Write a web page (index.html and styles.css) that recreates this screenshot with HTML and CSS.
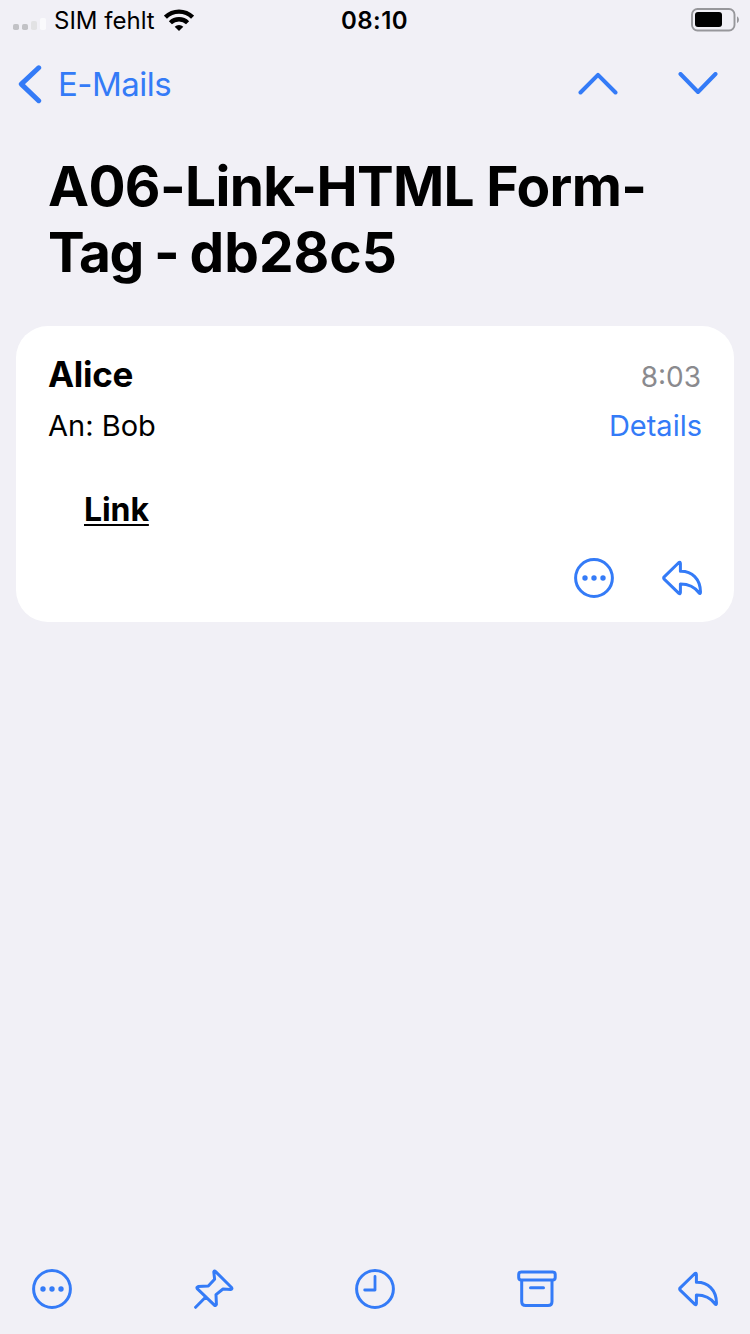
FILE: index.html
```html
<!DOCTYPE html>
<html lang="de">
<head>
<meta charset="utf-8">
<title>A06-Link-HTML Form-Tag - db28c5</title>
<link rel="stylesheet" href="styles.css">
</head>
<body>
<svg class="defs" aria-hidden="true">
  <symbol id="more" viewBox="0 0 40 40">
    <circle class="line" cx="20" cy="20" r="18.4"/>
    <g fill="currentColor"><circle cx="11" cy="20" r="2.700"/><circle cx="20" cy="20" r="2.700"/><circle cx="29" cy="20" r="2.700"/></g>
  </symbol>
  <symbol id="reply" viewBox="0 0 40 40">
    <path class="line" d="M18.400 5.500V13.300C30 13 38.300 21 38.500 34Q38.500 36.500 37 34.900C32.500 28.500 27 26 18.400 26V34.500Q18.300 36.500 16.900 35.300L2.200 21.200Q1.200 20 2.200 18.800L16.900 4.500Q18.300 3.500 18.400 5.500Z"/>
  </symbol>
</svg>

<header class="status">
  <div class="carrier">
    <svg class="signal" viewBox="0 0 34 14"><rect y="8" width="6" height="6" rx="1.800" fill="#c2c2c6"/><rect x="9" y="8" width="6" height="6" rx="1.800" fill="#c2c2c6"/><rect x="18" y="5" width="6" height="9" rx="1.800" fill="#e2e2e4"/><rect x="27" y="2" width="6" height="12" rx="1.800" fill="#fafafc"/></svg>
    <span class="carrier-name">SIM fehlt</span>
    <svg class="wifi" viewBox="0 0 30 22"><g fill="none" stroke="#000" stroke-width="4.400"><path d="M1.400 8.200A19.300 19.300 0 0 1 28.600 8.200"/><path d="M6.400 13.800A12.200 12.200 0 0 1 23.600 13.800"/></g><path d="M10.700 17.700A6.100 6.100 0 0 1 19.300 17.700L15 22Z"/></svg>
  </div>
  <time class="clock">08:10</time>
  <svg class="battery" viewBox="0 0 48 24"><rect x="1" y="1" width="42.500" height="21.500" rx="5.500" fill="none" stroke="#97979b" stroke-width="1.900"/><rect x="4" y="4" width="27" height="15" rx="3" fill="#000"/><path d="M46 8.200Q48 9.500 48 11.700T46 15.200Z" fill="#97979b"/></svg>
</header>

<nav class="nav">
  <a class="back">
    <svg class="back-icon" viewBox="0 0 26 40"><path d="M21.700 3.800L4.300 20.100L21.700 36.700"/></svg>
    <span>E-Mails</span>
  </a>
  <div class="steps">
    <svg viewBox="0 0 40 24"><path d="M2.500 20.500L20 2.800L37.500 20.500"/></svg>
    <svg viewBox="0 0 40 24"><path d="M2.500 2L20 20L37.500 2"/></svg>
  </div>
</nav>

<main>
  <h1 class="subject"><span class="subject-start">A06-Link-HTML Form-</span><br><span class="subject-tag">Tag - </span><span class="subject-id">db28c5</span></h1>
  <article class="card">
    <div class="row row-from"><strong class="sender">Alice</strong><time class="time">8:03</time></div>
    <div class="row row-to"><span class="recipient">An: Bob</span><a class="details">Details</a></div>
    <div class="body"><a class="link">Link</a></div>
    <div class="actions">
      <svg class="icon"><use href="#more"/></svg>
      <svg class="icon"><use href="#reply"/></svg>
    </div>
  </article>
</main>

<footer class="toolbar">
  <svg class="icon"><use href="#more"/></svg>
  <svg class="icon" viewBox="0 0 40 40"><path class="line" d="M1.600 38.300L12 27.800M19.800 2.900Q20.300 1.400 21.600 2.600L37.300 18.200Q38.800 20.200 36.800 20.500L29 20L22 25.600L22.400 35.200Q21.800 37.200 20.400 36.200L3.200 19.600Q2.400 18.100 4 17.600L14.300 17L20.600 10.200Z"/></svg>
  <svg class="icon" viewBox="0 0 40 40"><circle class="line" cx="20" cy="20" r="18.400"/><path class="line clock-hands" d="M20 7.500V21H9.700"/></svg>
  <svg class="icon" viewBox="0 0 40 40"><rect class="line" x="1.700" y="3" width="36.500" height="8" rx="2.500"/><path class="line" d="M4.700 11.500V32.500Q4.700 36.500 8.700 36.500H31Q35 36.500 35 32.500V11.500M13.500 18.800H26.500"/></svg>
  <svg class="icon"><use href="#reply"/></svg>
</footer>
</body>
</html>
```

FILE: styles.css
```css
* { box-sizing: border-box; }
body {
  margin: 0;
  height: 1334px;
  display: flex;
  flex-direction: column;
  background: #f1f0f6;
  color: #000;
  font-family: Inter, "Liberation Sans", sans-serif;
  overflow: hidden;
}
svg { display: block; flex: none; }
.defs { position: absolute; width: 0; height: 0; }
.line { fill: none; stroke: currentColor; stroke-width: 3; stroke-linecap: round; stroke-linejoin: round; }
.clock-hands { stroke-width: 2.8; }
.icon { width: 40px; height: 40px; color: #347bf7; }

.status {
  display: grid;
  grid-template-columns: 1fr auto 1fr;
  align-items: center;
  height: 40px;
  padding: 0 11px 0 13px;
  font-size: 24px;
  line-height: 40px;
}
.carrier { display: flex; align-items: center; }
.signal { width: 34px; height: 14px; margin: 6px 7px 0 0; }
.carrier-name { padding-top: 2px; line-height: 38px; }
.wifi { width: 30px; height: 22px; margin-left: 9px; }
.clock { padding-top: 2px; line-height: 38px; margin-left: -3px; font-weight: 600; letter-spacing: 0.4px; }
.battery { width: 48px; height: 24px; justify-self: end; }

.nav {
  display: flex;
  justify-content: space-between;
  height: 88px;
  padding: 0 32px 0 17px;
  align-items: center;
  color: #347bf7;
}
.nav path { fill: none; stroke: currentColor; stroke-width: 4; stroke-linecap: round; stroke-linejoin: round; }
.back { display: flex; align-items: center; font-size: 33px; line-height: 40px; letter-spacing: -0.5px; }
.back-icon { width: 26px; height: 40px; margin-right: 15px; }
.nav .back-icon path { stroke-width: 5; }
.steps { display: flex; gap: 60px; }
.steps svg { width: 40px; height: 24px; }

.subject { margin: 25px 48px 41px; font-size: 55px; line-height: 66px; font-weight: 700; white-space: nowrap; }
.subject-start { letter-spacing: -0.65px; }
.subject-tag { letter-spacing: -1.6px; }
.subject-id { letter-spacing: 0; }
.card { height: 296px; margin: 0 16px; padding: 22px 32px 0; background: #fff; border-radius: 32px; }
.row { display: flex; justify-content: space-between; align-items: baseline; }
.row-from { height: 52px; line-height: 52px; }
.row-to { height: 52px; line-height: 52px; font-size: 29px; }
.sender { font-size: 35px; font-weight: 700; letter-spacing: -0.3px; }
.time { margin-right: 1px; color: #8a8a8e; font-size: 28px; }
.details { color: #347bf7; }
.body { height: 106px; padding: 38px 0 0 36px; }
.link { font-size: 32px; line-height: 40px; font-weight: 700; letter-spacing: -0.1px; text-decoration: underline; text-decoration-thickness: 2px; text-underline-offset: 3px; text-decoration-skip-ink: none; }
.actions { display: flex; justify-content: flex-end; gap: 48px; }

.toolbar { display: flex; justify-content: space-between; margin-top: auto; padding: 0 32px 25px; }
```
